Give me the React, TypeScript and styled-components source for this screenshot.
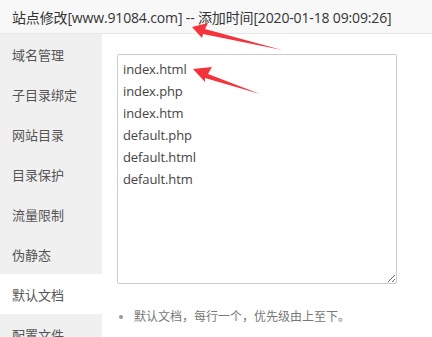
import React from "react";
import styled, { createGlobalStyle } from "styled-components";

const Global = createGlobalStyle`
  html, body { margin: 0; padding: 0; background: #fff; }
  body { font-family: "Open Sans", "Noto Sans", "Noto Sans CJK SC", sans-serif; }
  #root { width: 432px; height: 337px; overflow: hidden; position: relative; }
`;

const Page = styled.div`
  width: 432px;
  height: 337px;
  display: flex;
  flex-direction: column;
  position: relative;
  overflow: hidden;
`;

const TitleBar = styled.div`
  height: 33px;
  flex: none;
  background: #f8f8f8;
  border-bottom: 1px solid #e8e8e8;
  display: flex;
  align-items: center;
  padding-left: 12px;
  font-size: 14px;
  letter-spacing: -0.15px;
  color: #333;
  white-space: nowrap;
`;

const Body = styled.div`
  flex: 1;
  display: flex;
  min-height: 0;
`;

const Sidebar = styled.ul`
  width: 102px;
  flex: none;
  margin: 0;
  padding: 0;
  list-style: none;
  background: #f0f0f0;
`;

const NavItem = styled.li<{ $active?: boolean }>`
  height: 40px;
  display: flex;
  align-items: center;
  padding-left: 12px;
  font-size: 13px;
  color: #555;
  background: ${(p) => (p.$active ? "#fff" : "transparent")};
`;

const Content = styled.div`
  flex: 1;
  padding: 20px 0 0 15px;
`;

const Editor = styled.textarea`
  display: block;
  box-sizing: border-box;
  width: 280px;
  height: 230px;
  margin: 0;
  padding: 3px 5px;
  border: 1px solid #ccc;
  border-radius: 2px;
  font-family: "Open Sans", "Noto Sans", sans-serif;
  font-size: 13px;
  letter-spacing: -0.1px;
  line-height: 22px;
  color: #444;
  overflow: hidden;
  outline: none;
  resize: both;
`;

const Notes = styled.ul`
  margin: 22px 0 0 0;
  padding-left: 17px;
  font-size: 12px;
  color: #777;
  font-family: "Noto Sans CJK SC", sans-serif;
`;

const Note = styled.li`
  line-height: 20px;
  &::marker { color: #999; font-size: 11px; }
`;

const Overlay = styled.svg`
  position: absolute;
  left: 0;
  top: 0;
  pointer-events: none;
`;

const nav = ["域名管理", "子目录绑定", "网站目录", "目录保护", "流量限制", "伪静态", "默认文档", "配置文件"];

export default function App() {
  return (
    <>
      <Global />
      <Page>
        <TitleBar>站点修改[www.91084.com] -- 添加时间[2020-01-18 09:09:26]</TitleBar>
        <Body>
          <Sidebar>
            {nav.map((n) => (
              <NavItem key={n} $active={n === "默认文档"}>
                {n}
              </NavItem>
            ))}
          </Sidebar>
          <Content>
            <Editor
              readOnly
              defaultValue={"index.html\nindex.php\nindex.htm\ndefault.php\ndefault.html\ndefault.htm"}
            />
            <Notes>
              <Note>默认文档，每行一个，优先级由上至下。</Note>
            </Notes>
          </Content>
        </Body>
        <Overlay width="432" height="337" viewBox="0 0 432 337">
          <polygon
            fill="#f4333b"
            points="192,27 208,23 205,29 282,50 203,34 202,38"
          />
          <polygon
            fill="#f4333b"
            points="193,69 212,67 208,74 260,94 205,78 205,82"
          />
        </Overlay>
      </Page>
    </>
  );
}
